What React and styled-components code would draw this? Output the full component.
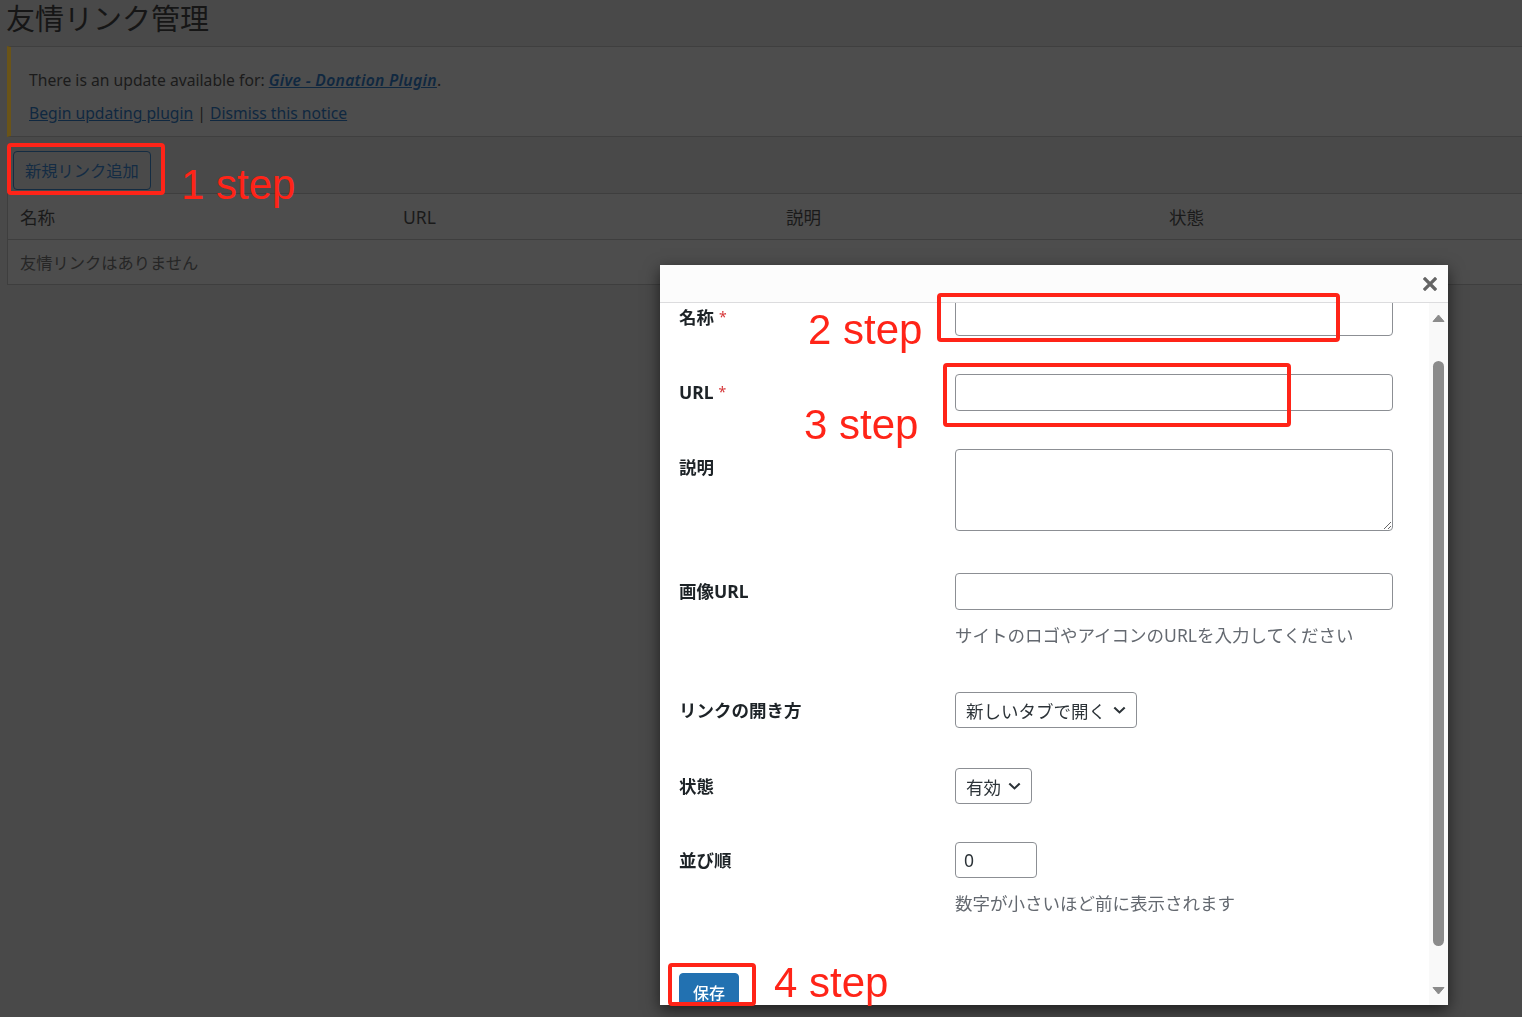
import React, { useLayoutEffect, useRef } from "react";
import styled, { createGlobalStyle } from "styled-components";

const svgUrl = (svg) => `url("data:image/svg+xml;utf8,${encodeURIComponent(svg)}")`;

const chevron = svgUrl(
  "<svg xmlns='http://www.w3.org/2000/svg' width='13' height='8' viewBox='0 0 13 8'><path d='M1.3 1.4 L6.5 6.4 L11.7 1.4' fill='none' stroke='#2c3338' stroke-width='2.1'/></svg>"
);

const GlobalStyle = createGlobalStyle`
  html, body { margin: 0; padding: 0; }
  body {
    background: #494949;
    font-family: "Noto Sans", "Noto Sans CJK JP", sans-serif;
    overflow: hidden;
  }
  * { box-sizing: border-box; }
`;

const Page = styled.div`
  position: relative;
  width: 1522px;
  height: 1017px;
  overflow: hidden;
`;

const Wrap = styled.div`
  padding-left: 7px;
  width: 1540px;
`;

const Title = styled.h1`
  margin: -1px 0 0 -1px;
  font: 400 29px/36px "Noto Sans CJK JP", sans-serif;
  color: #161616;
`;

const Notice = styled.div`
  margin-top: 11px;
  background: #4d4d4d;
  border-top: 1px solid #3f3f3f;
  border-bottom: 1px solid #3f3f3f;
  border-left: 4px solid #6a5418;
  padding: 21px 15px 11px 18px;
  font-size: 15.7px;
  line-height: 24px;
  color: #1b1b1b;
`;

const NoticeLine = styled.p`
  margin: ${(p) => (p.$second ? "9px 0 0" : "0")};
`;

const Link = styled.a`
  color: #102840;
  text-decoration: underline;
  font-style: ${(p) => (p.$italic ? "italic" : "normal")};
  font-weight: ${(p) => (p.$italic ? 600 : 400)};
  letter-spacing: ${(p) => (p.$italic ? "0.3px" : "0")};
`;

const Toolbar = styled.div`
  padding: 14px 0 3px 6px;
`;

const GhostButton = styled.button`
  height: 39px;
  padding: 0 11px;
  background: #4a4a4a;
  border: 1px solid #142c42;
  border-radius: 4px;
  color: #142c44;
  font: 400 16.25px/37px "Noto Sans CJK JP", sans-serif;
`;

const Table = styled.div`
  width: 1534px;
  background: #4d4d4d;
  border: 1px solid #3e3e3e;
`;

const TableRow = styled.div`
  display: grid;
  grid-template-columns: repeat(4, 383px);
  height: ${(p) => (p.$head ? "46px" : "44px")};
  align-items: center;
  border-bottom: ${(p) => (p.$head ? "1px solid #3e3e3e" : "none")};
`;

const Cell = styled.div`
  padding-left: 12px;
  font-size: ${(p) => (p.$head ? "17.5px" : "16.25px")};
  color: ${(p) => (p.$head ? "#1a1a1a" : "#262626")};
  font-family: "Noto Sans", "Noto Sans CJK JP", sans-serif;
  white-space: nowrap;
`;

const Modal = styled.div`
  position: fixed;
  left: 660px;
  top: 265px;
  width: 788px;
  height: 740px;
  background: #fff;
  display: flex;
  flex-direction: column;
  box-shadow: 0 5px 15px rgba(0, 0, 0, 0.6);
`;

const ModalHeader = styled.div`
  height: 38px;
  flex: none;
  background: #fcfcfc;
  border-bottom: 1px solid #dcdcde;
  display: flex;
  align-items: center;
  justify-content: flex-end;
  padding-right: 11px;
`;

const CloseButton = styled.button`
  border: 0;
  background: none;
  padding: 0;
  width: 14px;
  height: 14px;
  display: flex;
`;

const ModalBody = styled.div`
  flex: 1;
  min-height: 0;
  display: flex;
`;

const Viewport = styled.div`
  flex: 1;
  overflow: hidden;
`;

const ScrollRail = styled.div`
  width: 19px;
  flex: none;
  background: #f9f9f9;
  display: flex;
  flex-direction: column;
`;

const RailButton = styled.div`
  height: 30px;
  flex: none;
  display: flex;
  align-items: center;
  justify-content: center;
`;

const RailTrack = styled.div`
  flex: 1;
  display: flex;
  justify-content: center;
`;

const Thumb = styled.div`
  width: 11px;
  background: #8b8b8b;
  border-radius: 6px;
`;

const Form = styled.form`
  padding: 10px 0 0 19px;
`;

const Row = styled.div`
  display: grid;
  grid-template-columns: 276px 438px;
  align-items: start;
  padding: 19px 0 ${(p) => p.$pb}px;
`;

const Label = styled.label`
  display: block;
  height: 37px;
  font-size: 17.5px;
  font-weight: 700;
  line-height: 37px;
  color: #1d2327;
  white-space: nowrap;
`;

const Required = styled.span`
  color: #d63638;
  font-size: 14px;
  font-weight: 400;
  line-height: 0;
  position: relative;
  top: -2px;
  margin-left: 5px;
`;

const Field = styled.div`
  display: flex;
  flex-direction: column;
  align-items: flex-start;
`;

const TextInput = styled.input`
  display: block;
  width: ${(p) => p.$w || 438}px;
  height: ${(p) => p.$h || 37}px;
  border: 1px solid #8c8f94;
  border-radius: 4px;
  padding: 0 8px;
  font: 400 17.5px "Noto Sans", sans-serif;
  color: #2c3338;
  background: #fff;
  outline: none;
`;

const TextArea = styled.textarea`
  display: block;
  width: 438px;
  height: 82px;
  border: 1px solid #8c8f94;
  border-radius: 4px;
  padding: 6px 8px;
  font: 400 17.5px "Noto Sans", sans-serif;
  background: #fff;
  outline: none;
`;

const Select = styled.select`
  display: block;
  appearance: none;
  -webkit-appearance: none;
  width: ${(p) => p.$w}px;
  height: 36px;
  border: 1px solid #8c8f94;
  border-radius: 4px;
  padding: 0 28px 0 10px;
  font: 400 17.5px "Noto Sans CJK JP", sans-serif;
  color: #2c3338;
  background: #fff ${chevron} no-repeat right 10px center / 13px 8px;
  outline: none;
`;

const Hint = styled.p`
  margin: 12px 0 0;
  height: 26px;
  font: 400 17.5px/26px "Noto Sans", "Noto Sans CJK JP", sans-serif;
  color: #646970;
  white-space: nowrap;
`;

const Footer = styled.div`
  padding: 38px 0 31px;
`;

const PrimaryButton = styled.button`
  display: block;
  height: 38px;
  padding: 0 13px;
  background: #2271b1;
  border: 1px solid #2271b1;
  border-radius: 4px;
  color: #fff;
  font: 500 16px/36px "Noto Sans CJK JP", sans-serif;
`;

const Mark = styled.div`
  position: absolute;
  left: ${(p) => p.$x}px;
  top: ${(p) => p.$y}px;
  width: ${(p) => p.$w}px;
  height: ${(p) => p.$h}px;
  border: 4px solid #ff2418;
  border-radius: 4px;
  pointer-events: none;
`;

const StepText = styled.div`
  position: absolute;
  left: ${(p) => p.$x}px;
  top: ${(p) => p.$y}px;
  font: 400 42px/42px "Liberation Sans", Arial, sans-serif;
  color: #ff2418;
  white-space: nowrap;
  pointer-events: none;
`;

function CloseIcon() {
  return (
    <svg width="14" height="14" viewBox="0 0 14 14">
      <path d="M2 2L12 12M12 2L2 12" stroke="#646464" strokeWidth="3.2" strokeLinecap="square" />
    </svg>
  );
}

function Triangle({ down }) {
  return (
    <svg width="13" height="9" viewBox="0 0 13 9">
      <path
        d={down ? "M1 1.5 L12 1.5 L6.5 8 Z" : "M6.5 1 L12 7.5 L1 7.5 Z"}
        fill="#8b8b8b"
        stroke="#8b8b8b"
        strokeWidth="1"
        strokeLinejoin="round"
      />
    </svg>
  );
}

const CONTENT_HEIGHT = 770;
const VIEW_HEIGHT = 702;
const SCROLL_TOP = 33;
const TRACK = VIEW_HEIGHT - 60;

export default function App() {
  const bodyRef = useRef(null);
  useLayoutEffect(() => {
    if (bodyRef.current) bodyRef.current.scrollTop = SCROLL_TOP;
  }, []);

  const thumbLen = Math.round((TRACK * VIEW_HEIGHT) / CONTENT_HEIGHT);
  const thumbTop = Math.round(
    (SCROLL_TOP / (CONTENT_HEIGHT - VIEW_HEIGHT)) * (TRACK - thumbLen)
  );

  return (
    <Page>
      <GlobalStyle />
      <Wrap>
        <Title>友情リンク管理</Title>
        <Notice>
          <NoticeLine>
            There is an update available for: <Link $italic href="#">Give - Donation Plugin</Link>.
          </NoticeLine>
          <NoticeLine $second>
            <Link href="#">Begin updating plugin</Link> | <Link href="#">Dismiss this notice</Link>
          </NoticeLine>
        </Notice>
        <Toolbar>
          <GhostButton>新規リンク追加</GhostButton>
        </Toolbar>
        <Table>
          <TableRow $head>
            <Cell $head>名称</Cell>
            <Cell $head>URL</Cell>
            <Cell $head>説明</Cell>
            <Cell $head>状態</Cell>
          </TableRow>
          <TableRow>
            <Cell>友情リンクはありません</Cell>
          </TableRow>
        </Table>
      </Wrap>

      <Modal>
        <ModalHeader>
          <CloseButton aria-label="close">
            <CloseIcon />
          </CloseButton>
        </ModalHeader>
        <ModalBody>
          <Viewport ref={bodyRef}>
            <Form onSubmit={(e) => e.preventDefault()}>
              <Row $pb={19}>
                <Label>
                  名称<Required>*</Required>
                </Label>
                <Field>
                  <TextInput type="text" />
                </Field>
              </Row>
              <Row $pb={19}>
                <Label>
                  URL<Required>*</Required>
                </Label>
                <Field>
                  <TextInput type="text" />
                </Field>
              </Row>
              <Row $pb={23}>
                <Label>説明</Label>
                <Field>
                  <TextArea />
                </Field>
              </Row>
              <Row $pb={25}>
                <Label>画像URL</Label>
                <Field>
                  <TextInput type="text" />
                  <Hint>サイトのロゴやアイコンのURLを入力してください</Hint>
                </Field>
              </Row>
              <Row $pb={20}>
                <Label>リンクの開き方</Label>
                <Field>
                  <Select $w={182} defaultValue="new">
                    <option value="new">新しいタブで開く</option>
                  </Select>
                </Field>
              </Row>
              <Row $pb={18}>
                <Label>状態</Label>
                <Field>
                  <Select $w={77} defaultValue="on">
                    <option value="on">有効</option>
                  </Select>
                </Field>
              </Row>
              <Row $pb={19}>
                <Label>並び順</Label>
                <Field>
                  <TextInput type="number" $w={82} $h={36} defaultValue="0" />
                  <Hint>数字が小さいほど前に表示されます</Hint>
                </Field>
              </Row>
              <Footer>
                <PrimaryButton type="submit">保存</PrimaryButton>
              </Footer>
            </Form>
          </Viewport>
          <ScrollRail aria-hidden="true">
            <RailButton>
              <Triangle />
            </RailButton>
            <RailTrack>
              <Thumb style={{ marginTop: thumbTop, height: thumbLen }} />
            </RailTrack>
            <RailButton>
              <Triangle down />
            </RailButton>
          </ScrollRail>
        </ModalBody>
      </Modal>

      <Mark $x={7} $y={143} $w={158} $h={52} />
      <StepText $x={181} $y={164}>1 step</StepText>
      <Mark $x={937} $y={293} $w={403} $h={49} />
      <StepText $x={808} $y={309}>2 step</StepText>
      <Mark $x={943} $y={363} $w={348} $h={64} />
      <StepText $x={804} $y={404}>3 step</StepText>
      <Mark $x={668} $y={963} $w={88} $h={43} />
      <StepText $x={774} $y={962}>4 step</StepText>
    </Page>
  );
}
